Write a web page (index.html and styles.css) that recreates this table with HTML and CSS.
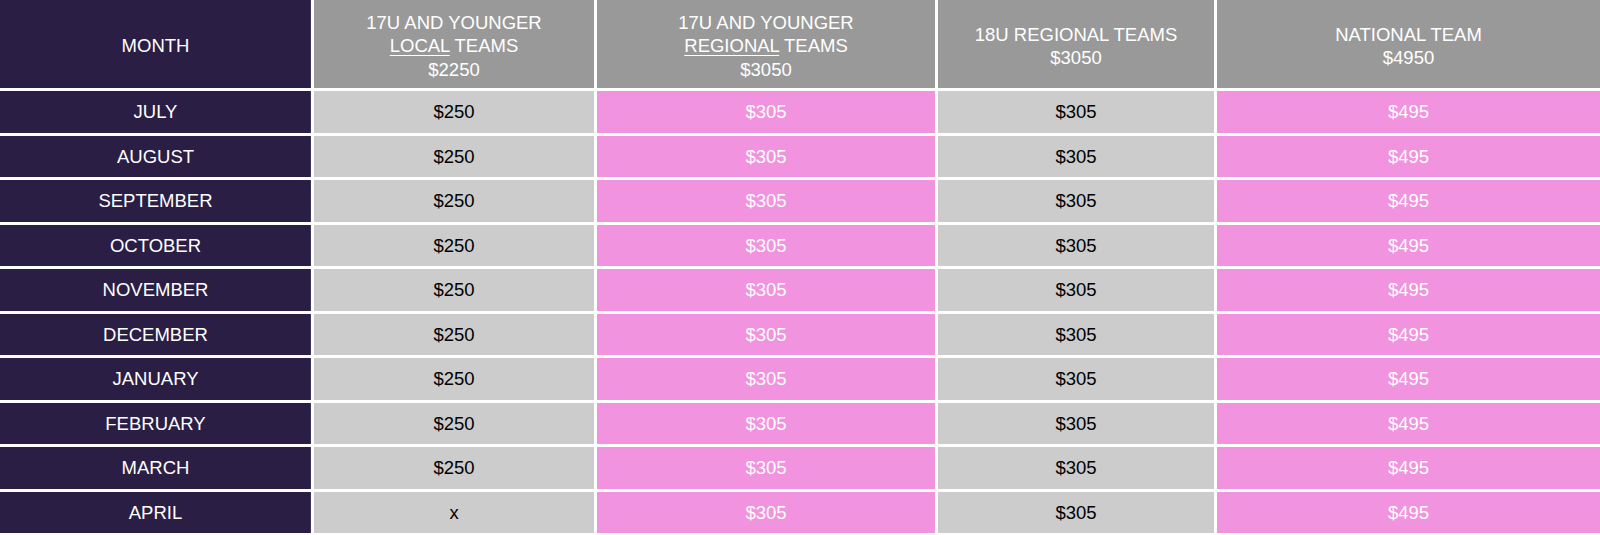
FILE: index.html
```html
<!DOCTYPE html>
<html>
<head>
<meta charset="utf-8">
<link rel="stylesheet" href="styles.css">
</head>
<body>
<table class="fees">
  <colgroup>
    <col class="c-month">
    <col class="c-local">
    <col class="c-regional">
    <col class="c-18u">
    <col class="c-national">
  </colgroup>
  <thead>
    <tr>
      <th class="month">MONTH</th>
      <th>17U AND YOUNGER<br><u>LOCAL</u> TEAMS<br>$2250</th>
      <th>17U AND YOUNGER<br><u>REGIONAL</u> TEAMS<br>$3050</th>
      <th>18U REGIONAL TEAMS<br>$3050</th>
      <th>NATIONAL TEAM<br>$4950</th>
    </tr>
  </thead>
  <tbody>
    <tr><td class="month">JULY</td><td class="grey">$250</td><td class="pink">$305</td><td class="grey">$305</td><td class="pink">$495</td></tr>
    <tr><td class="month">AUGUST</td><td class="grey">$250</td><td class="pink">$305</td><td class="grey">$305</td><td class="pink">$495</td></tr>
    <tr><td class="month">SEPTEMBER</td><td class="grey">$250</td><td class="pink">$305</td><td class="grey">$305</td><td class="pink">$495</td></tr>
    <tr><td class="month">OCTOBER</td><td class="grey">$250</td><td class="pink">$305</td><td class="grey">$305</td><td class="pink">$495</td></tr>
    <tr><td class="month">NOVEMBER</td><td class="grey">$250</td><td class="pink">$305</td><td class="grey">$305</td><td class="pink">$495</td></tr>
    <tr><td class="month">DECEMBER</td><td class="grey">$250</td><td class="pink">$305</td><td class="grey">$305</td><td class="pink">$495</td></tr>
    <tr><td class="month">JANUARY</td><td class="grey">$250</td><td class="pink">$305</td><td class="grey">$305</td><td class="pink">$495</td></tr>
    <tr><td class="month">FEBRUARY</td><td class="grey">$250</td><td class="pink">$305</td><td class="grey">$305</td><td class="pink">$495</td></tr>
    <tr><td class="month">MARCH</td><td class="grey">$250</td><td class="pink">$305</td><td class="grey">$305</td><td class="pink">$495</td></tr>
    <tr><td class="month">APRIL</td><td class="grey">x</td><td class="pink">$305</td><td class="grey">$305</td><td class="pink">$495</td></tr>
  </tbody>
</table>
</body>
</html>
```

FILE: styles.css
```css
html, body {
  margin: 0;
  padding: 0;
  background: #ffffff;
}

body {
  font-family: "Liberation Sans", Arial, sans-serif;
  font-size: 18.5px;
  overflow: hidden;
}

.fees {
  border-collapse: separate;
  border-spacing: 3px;
  margin: -3px 0 0 -3px;
  width: calc(100% + 6px);
  table-layout: fixed;
}

.c-month { width: 311px; }
.c-local { width: 280px; }
.c-regional { width: 338px; }
.c-18u { width: 276px; }
.c-national { width: 383px; }

.fees th,
.fees td {
  padding: 0;
  text-align: center;
  vertical-align: middle;
  font-weight: normal;
}

.fees thead th {
  height: 88px;
  padding-top: 4px;
  box-sizing: border-box;
  background: #999999;
  color: #ffffff;
  line-height: 23.5px;
}

.fees tbody td {
  height: 41.5px;
  line-height: 21px;
}

.fees .month {
  background: #2a1e45;
  color: #ffffff;
  box-shadow: inset -1px 0 0 #3e3360;
}

.fees .grey {
  background: #cccccc;
  color: #000000;
}

.fees .pink {
  background: #f193df;
  color: #ffffff;
}

.fees u {
  text-decoration: underline;
  text-underline-offset: 3px;
}
```
